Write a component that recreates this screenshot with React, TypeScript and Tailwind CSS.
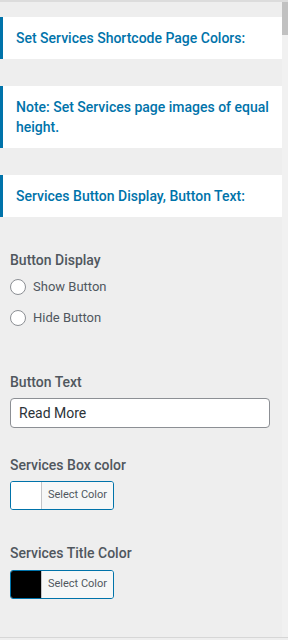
import { useState } from "react";

const font = { fontFamily: "Roboto, 'Noto Sans', sans-serif" };

function Notice({ children }: { children: React.ReactNode }) {
  return (
    <div className="bg-white border-l-[3px] border-[#0073aa] pl-[13px] pr-3 py-[11px] text-[14px] leading-[20px] font-medium text-[#0073aa]">
      {children}
    </div>
  );
}

function ColorPicker({ color }: { color: string }) {
  return (
    <div className="flex w-[104px] h-[29px] rounded-[3px] border border-[#0073aa] overflow-hidden">
      <div className="w-[31px] border-r border-[#c3c4c7]" style={{ background: color }} />
      <div className="flex-1 flex items-center justify-center bg-[#f6f7f7] text-[11px] text-[#50575e]">
        Select Color
      </div>
    </div>
  );
}

export default function App() {
  const [display, setDisplay] = useState("");
  return (
    <div className="w-[288px] h-[640px] bg-[#eeeeee] flex flex-col overflow-hidden" style={font}>
      <div className="h-[2px] bg-[#dcdcdc]" />
      <div className="flex flex-1">
        <div className="w-[282px] flex flex-col pt-[15px]">
          <Notice>Set Services Shortcode Page Colors:</Notice>
          <div className="h-[27px]" />
          <Notice>Note: Set Services page images of equal height.</Notice>
          <div className="h-[27px]" />
          <Notice>Services Button Display, Button Text:</Notice>

          <div className="px-[10px] pt-[33px]">
            <div className="text-[14px] font-medium text-[#50575e] leading-[20px]">Button Display</div>
            <div className="flex flex-col gap-[15px] mt-[9px]">
              {["Show Button", "Hide Button"].map((l) => (
                <label key={l} className="flex items-center gap-[7px] text-[13px] text-[#50575e] leading-[16px]">
                  <span
                    onClick={() => setDisplay(l)}
                    className="w-[16px] h-[16px] rounded-full border border-[#8c8f94] bg-white flex items-center justify-center"
                  >
                    {display === l && <span className="w-[8px] h-[8px] rounded-full bg-[#0073aa]" />}
                  </span>
                  {l}
                </label>
              ))}
            </div>

            <div className="text-[14px] font-medium text-[#50575e] leading-[20px] mt-[46px]">Button Text</div>
            <input
              defaultValue="Read More"
              className="mt-[6px] w-[260px] h-[30px] rounded-[4px] border border-[#8c8f94] bg-white px-[8px] text-[14px] text-[#2c3338] outline-none"
              style={font}
            />

            <div className="text-[14px] font-medium text-[#50575e] leading-[20px] mt-[27px]">Services Box color</div>
            <div className="mt-[6px]">
              <ColorPicker color="#ffffff" />
            </div>

            <div className="text-[14px] font-medium text-[#50575e] leading-[20px] mt-[33px]">Services Title Color</div>
            <div className="mt-[7px]">
              <ColorPicker color="#000000" />
            </div>
          </div>
        </div>
        <div className="w-[6px] bg-[#f1f1f1] flex flex-col">
          <div className="h-[33px] bg-[#c1c1c1]" />
        </div>
      </div>
      <div className="h-[3px] border-t border-[#d6d6d6] bg-[#eeeeee]" />
    </div>
  );
}
